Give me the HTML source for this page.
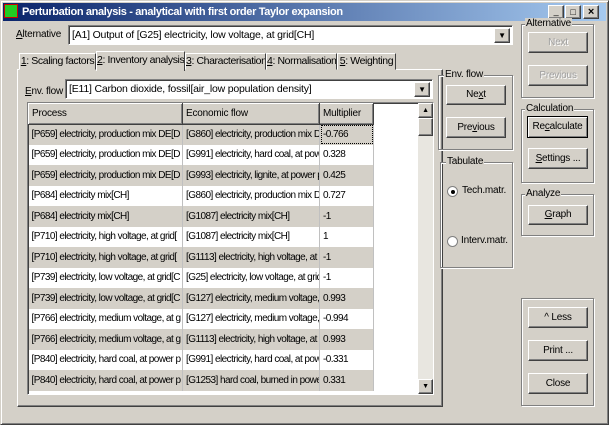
<!DOCTYPE html><html><head><style>
*{box-sizing:border-box;margin:0;padding:0}
body{width:609px;height:425px;overflow:hidden;background:#d4d0c8;font-family:"Liberation Sans",sans-serif;font-size:10px;letter-spacing:-0.2px;color:#000;position:relative}
.a{position:absolute}
.win{left:0;top:0;width:609px;height:425px;border:1px solid;border-color:#d4d0c8 #404040 #404040 #d4d0c8;box-shadow:inset 1px 1px #fff,inset -1px -1px #808080}
.tb{left:3px;top:3px;width:603px;height:18px;background:linear-gradient(90deg,#0a246a,#a6caf0);color:#fff;font-weight:bold;font-size:11px;letter-spacing:-0.35px;line-height:18px;padding-left:19px}
.sunk{border:1px solid;border-color:#808080 #fff #fff #808080;box-shadow:inset 1px 1px #404040}
.btn{border:1px solid;border-color:#fff #404040 #404040 #fff;box-shadow:inset -1px -1px #808080;text-align:center;background:#d4d0c8}
.grp{border:1px solid #808080;box-shadow:1px 1px #fff,inset 1px 1px #fff}
.gl{background:#d4d0c8;padding:0 1px;top:-7px;left:5px;position:absolute;line-height:12px}
.dd{position:absolute;right:2px;top:2px;width:16px;height:15px}
.dis{color:#a0a0a0;text-shadow:1px 1px #fff}
table{border-collapse:collapse;table-layout:fixed}
td{height:20.5px;white-space:nowrap;overflow:hidden;padding-left:3px;font-size:10px;letter-spacing:-0.55px;border-right:1px solid #c0c0c0}
tr.g td{background:#d4d0c8}tr.w td{background:#fff}
.tab{position:absolute;top:53px;height:17px;border:1px solid;border-color:#fff #404040 transparent #fff;line-height:15px;text-align:center;background:#d4d0c8;white-space:nowrap;overflow:hidden;font-size:10.5px;letter-spacing:-0.4px}
</style></head><body>
<div class="a win"></div>
<div class="a tb">Perturbation analysis - analytical with first order Taylor expansion</div>
<div class="a" style="left:4px;top:4px;width:14px;height:14px;background:#2c2;border:1px solid #c00"></div>
<div class="a btn" style="left:548px;top:5px;width:16px;height:14px;font-size:9px;line-height:11px">_</div>
<div class="a btn" style="left:565px;top:5px;width:16px;height:14px;font-size:9px;line-height:12px">□</div>
<div class="a btn" style="left:583px;top:5px;width:16px;height:14px;font-size:11px;line-height:12px;font-weight:bold">×</div>

<div class="a" style="left:16px;top:29px"><u>A</u>lternative</div>
<div class="a sunk" style="left:68px;top:25px;width:445px;height:20px;background:#fff;padding:3px 3px;line-height:12px;font-size:10.5px">[A1] Output of [G25] electricity, low voltage, at grid[CH]<div class="dd btn" style="font-size:8px;line-height:13px">▼</div></div>

<div class="a" style="left:17px;top:69px;width:426px;height:338px;border:1px solid;border-color:#fff #404040 #404040 #fff;box-shadow:inset -1px -1px #808080"></div>
<div class="tab" style="left:19px;width:77px"><u>1</u>: Scaling factors</div>
<div class="tab" style="left:96px;top:51px;width:89px;height:20px;border-bottom:none;z-index:2;line-height:17px"><u>2</u>: Inventory analysis</div>
<div class="tab" style="left:185px;width:81px"><u>3</u>: Characterisation</div>
<div class="tab" style="left:266px;width:71px"><u>4</u>: Normalisation</div>
<div class="tab" style="left:337px;width:59px"><u>5</u>: Weighting</div>

<div class="a" style="left:25px;top:86px"><u>E</u>nv. flow</div>
<div class="a sunk" style="left:65px;top:79px;width:368px;height:20px;background:#fff;padding:3px 3px;line-height:12px;font-size:10.5px">[E11] Carbon dioxide, fossil[air_low population density]<div class="dd btn" style="font-size:8px;line-height:13px">▼</div></div>

<div class="a sunk" style="left:27px;top:102px;width:407px;height:293px;background:#fff;overflow:hidden">
<table style="width:345px">
<colgroup><col style="width:154px"><col style="width:137px"><col style="width:54px"></colgroup>
<tr><td class="btn" style="height:20px;text-align:left;border-color:#fff #404040 #404040 #fff;padding-left:3px;letter-spacing:-0.2px">Process</td><td class="btn" style="text-align:left;border-color:#fff #404040 #404040 #fff;letter-spacing:-0.2px">Economic flow</td><td class="btn" style="text-align:left;border-color:#fff #404040 #404040 #fff;letter-spacing:-0.2px">Multiplier</td></tr>
<tr class="g"><td>[P659] electricity, production mix DE[D</td><td>[G860] electricity, production mix D</td><td style="outline:1px dotted #000;outline-offset:-2px">-0.766</td></tr>
<tr class="w"><td>[P659] electricity, production mix DE[D</td><td>[G991] electricity, hard coal, at pow</td><td>0.328</td></tr>
<tr class="g"><td>[P659] electricity, production mix DE[D</td><td>[G993] electricity, lignite, at power p</td><td>0.425</td></tr>
<tr class="w"><td>[P684] electricity mix[CH]</td><td>[G860] electricity, production mix D</td><td>0.727</td></tr>
<tr class="g"><td>[P684] electricity mix[CH]</td><td>[G1087] electricity mix[CH]</td><td>-1</td></tr>
<tr class="w"><td>[P710] electricity, high voltage, at grid[</td><td>[G1087] electricity mix[CH]</td><td>1</td></tr>
<tr class="g"><td>[P710] electricity, high voltage, at grid[</td><td>[G1113] electricity, high voltage, at</td><td>-1</td></tr>
<tr class="w"><td>[P739] electricity, low voltage, at grid[C</td><td>[G25] electricity, low voltage, at grid</td><td>-1</td></tr>
<tr class="g"><td>[P739] electricity, low voltage, at grid[C</td><td>[G127] electricity, medium voltage,</td><td>0.993</td></tr>
<tr class="w"><td>[P766] electricity, medium voltage, at g</td><td>[G127] electricity, medium voltage,</td><td>-0.994</td></tr>
<tr class="g"><td>[P766] electricity, medium voltage, at g</td><td>[G1113] electricity, high voltage, at</td><td>0.993</td></tr>
<tr class="w"><td>[P840] electricity, hard coal, at power p</td><td>[G991] electricity, hard coal, at pow</td><td>-0.331</td></tr>
<tr class="g"><td>[P840] electricity, hard coal, at power p</td><td>[G1253] hard coal, burned in powe</td><td>0.331</td></tr>
</table>
<div class="a" style="left:390px;top:0;width:15px;height:291px;background:#e8e6e0"></div>
<div class="a btn" style="left:390px;top:0;width:15px;height:15px;font-size:7px;line-height:13px">▲</div>
<div class="a btn" style="left:390px;top:15px;width:15px;height:18px"></div>
<div class="a btn" style="left:390px;top:276px;width:15px;height:15px;font-size:7px;line-height:13px">▼</div>
</div>

<div class="a grp" style="left:438px;top:75px;width:75px;height:75px"><span class="gl">Env. flow</span></div>
<div class="a btn" style="left:446px;top:85px;width:60px;height:20px;line-height:18px">Ne<u>x</u>t</div>
<div class="a btn" style="left:446px;top:117px;width:60px;height:21px;line-height:19px">Pre<u>v</u>ious</div>

<div class="a grp" style="left:440px;top:162px;width:73px;height:106px"><span class="gl">Tabulate</span></div>
<div class="a" style="left:447px;top:186px;width:11px;height:11px;border-radius:50%;background:#fff;border:1px solid #808080"><div style="width:4px;height:4px;background:#000;border-radius:50%;margin:2.5px"></div></div>
<div class="a" style="left:462px;top:185px">Tech.matr.</div>
<div class="a" style="left:447px;top:236px;width:11px;height:11px;border-radius:50%;background:#fff;border:1px solid #808080"></div>
<div class="a" style="left:461px;top:235px">Interv.matr.</div>

<div class="a grp" style="left:521px;top:24px;width:73px;height:74px"><span class="gl" style="left:3px">Alternative</span></div>
<div class="a btn dis" style="left:528px;top:32px;width:60px;height:21px;line-height:19px">Next</div>
<div class="a btn dis" style="left:528px;top:65px;width:60px;height:21px;line-height:19px">Previous</div>

<div class="a grp" style="left:521px;top:109px;width:73px;height:74px"><span class="gl" style="left:3px">Calculation</span></div>
<div class="a btn" style="left:527px;top:116px;width:61px;height:22px;line-height:20px;border:1px solid #000;box-shadow:inset 1px 1px #fff,inset -1px -1px #808080">Re<u>c</u>alculate</div>
<div class="a btn" style="left:528px;top:148px;width:60px;height:21px;line-height:19px"><u>S</u>ettings ...</div>

<div class="a grp" style="left:521px;top:194px;width:73px;height:42px"><span class="gl" style="left:3px">Analyze</span></div>
<div class="a btn" style="left:528px;top:205px;width:60px;height:20px;line-height:18px"><u>G</u>raph</div>

<div class="a grp" style="left:521px;top:298px;width:73px;height:108px"></div>
<div class="a btn" style="left:528px;top:307px;width:60px;height:21px;line-height:19px">^ Less</div>
<div class="a btn" style="left:528px;top:340px;width:60px;height:21px;line-height:19px">Print ...</div>
<div class="a btn" style="left:528px;top:373px;width:60px;height:21px;line-height:19px">Close</div>
</body></html>
